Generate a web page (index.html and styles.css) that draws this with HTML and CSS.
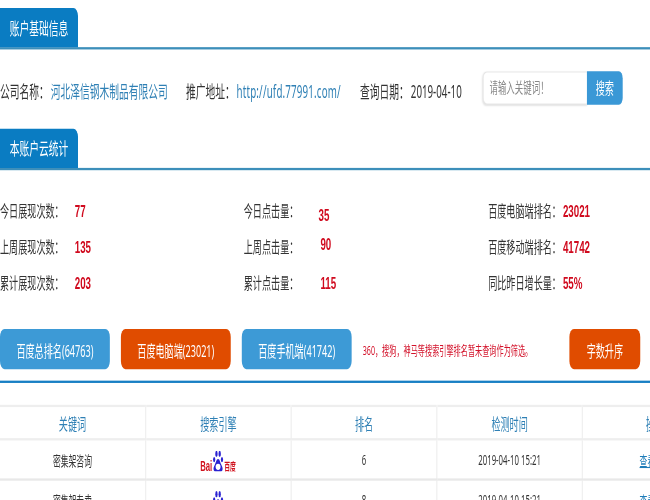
FILE: index.html
```html
<!DOCTYPE html>
<html lang="zh-CN">
<head>
<meta charset="utf-8">
<title>账户基础信息</title>
<link rel="stylesheet" href="styles.css">
</head>
<body>
<div class="page">
  <div class="head"><h2 class="tab">账户基础信息</h2></div>
  <div class="info">
    <span class="info-company">公司名称：<a class="link">河北泽信钢木制品有限公司</a></span>
    <span class="info-url">推广地址：<a class="link url">http://ufd.77991.com/</a></span>
    <span class="info-date">查询日期：<span class="date">2019-04-10</span></span>
    <form class="search">
      <input class="search-input" placeholder="请输入关键词！">
      <button class="search-btn" type="button">搜索</button>
    </form>
  </div>
  <div class="head"><h2 class="tab">本账户云统计</h2></div>
  <div class="stats">
    <div class="stat"><span class="label">今日展现次数：</span><b class="val">77</b></div>
    <div class="stat"><span class="label">今日点击量：</span><b class="val low">35</b></div>
    <div class="stat"><span class="label">百度电脑端排名：</span><b class="val">23021</b></div>
    <div class="stat"><span class="label">上周展现次数：</span><b class="val">135</b></div>
    <div class="stat"><span class="label">上周点击量：</span><b class="val high shift">90</b></div>
    <div class="stat"><span class="label">百度移动端排名：</span><b class="val">41742</b></div>
    <div class="stat"><span class="label">累计展现次数：</span><b class="val">203</b></div>
    <div class="stat"><span class="label">累计点击量：</span><b class="val shift">115</b></div>
    <div class="stat"><span class="label">同比昨日增长量：</span><b class="val">55%</b></div>
  </div>
  <div class="actions">
    <button class="btn blue" type="button">百度总排名(64763)</button>
    <button class="btn orange" type="button">百度电脑端(23021)</button>
    <button class="btn blue" type="button">百度手机端(41742)</button>
    <p class="note">360，搜狗，神马等搜索引擎排名暂未查询作为筛选。</p>
    <button class="btn orange small" type="button">字数升序</button>
  </div>
  <div class="rule"></div>
  <table class="table">
    <thead>
      <tr><th>关键词</th><th>搜索引擎</th><th>排名</th><th>检测时间</th><th>操作</th></tr>
    </thead>
    <tbody>
      <tr>
        <td>密集架咨询</td>
        <td><svg class="baidu" viewBox="0 0 56 20" width="56" height="18" preserveAspectRatio="none"><use href="#baidu-logo"/></svg></td>
        <td>6</td><td>2019-04-10 15:21</td><td><a class="view">查看详情</a></td>
      </tr>
      <tr>
        <td>密集架专卖</td>
        <td><svg class="baidu" viewBox="0 0 56 20" width="56" height="18" preserveAspectRatio="none"><use href="#baidu-logo"/></svg></td>
        <td>8</td><td>2019-04-10 15:21</td><td><a class="view">查看详情</a></td>
      </tr>
    </tbody>
  </table>
</div>
<svg class="defs" width="0" height="0">
  <defs>
    <g id="baidu-logo">
      <text x="0" y="19.500" class="logo-en" textLength="18.500" lengthAdjust="spacingAndGlyphs">Bai</text>
      <ellipse cx="21.500" cy="8.500" rx="1.700" ry="2.500" fill="#2a22d2"/>
      <ellipse cx="25" cy="3" rx="1.800" ry="3" fill="#2a22d2"/>
      <ellipse cx="30" cy="3" rx="1.800" ry="3" fill="#2a22d2"/>
      <ellipse cx="33.500" cy="8.500" rx="1.700" ry="2.500" fill="#2a22d2"/>
      <path d="M27.500 8c-2.500 0-3 3-5 5.500-2 2.500-2.500 4-1.500 5.500 1.500 1.500 3.500 1 6.500 1s5 .5 6.500-1c1-1.500.5-3-1.500-5.500-2-2.500-2.500-5.500-5-5.500z" fill="#2a22d2"/>
      <ellipse cx="27.500" cy="15.500" rx="3.800" ry="3" fill="#fff"/>
      <text x="37" y="19.500" class="logo-cn" textLength="18" lengthAdjust="spacingAndGlyphs">百度</text>
    </g>
  </defs>
</svg>
</body>
</html>
```
FILE: styles.css
```css
html, body {
  margin: 0;
  padding: 0;
  height: 500px;
  overflow: hidden;
  background: #fff;
}
.page {
  width: 1121px;
  padding-top: 7px;
  transform: scale(.65, 1.15);
  transform-origin: 0 0;
  font-family: "Noto Sans", "Noto Sans CJK SC", sans-serif;
  font-size: 15px;
  color: #333;
  filter: blur(.3px);
}
.defs { position: absolute; }
.head {
  border-bottom: 2px solid #3d8fba;
  width: 1000px;
}
.tab {
  width: 120px;
  height: 34px;
  margin: 0;
  background: #0a7cc2;
  border-radius: 0 7px 0 0;
  color: #fff;
  font-size: 15px;
  font-weight: 400;
  line-height: 34px;
  text-align: center;
}
.info {
  display: flex;
  align-items: center;
  height: 68.500px;
  line-height: 20px;
  white-space: nowrap;
}
.info-company { width: 286px; padding-top: 3px; }
.info-url { width: 268px; padding-top: 3px; }
.info-date { width: 189px; padding-top: 3px; }
.link, .date { margin-left: 3px; }
.link { color: #2f80b5; }
.url { letter-spacing: .25px; }
.search { display: flex; margin: -2px 0 0; }
.search-input {
  box-sizing: border-box;
  width: 160px;
  height: 29.500px;
  padding: 0 9px;
  border: 1px solid #e6e6e6;
  border-right: 0;
  border-radius: 6px 0 0 6px;
  box-shadow: 0 1px 2px #e4e4e4;
  font: 13px "Noto Sans", "Noto Sans CJK SC", sans-serif;
}
.search-input::placeholder { color: #888; opacity: 1; }
.search-btn {
  width: 55px;
  height: 29.500px;
  padding: 0;
  border: 0;
  border-radius: 0 6px 6px 0;
  background: #3a98d6;
  color: #fff;
  font: 14px "Noto Sans", "Noto Sans CJK SC", sans-serif;
}
.stats {
  display: grid;
  grid-template-columns: 375px 376px 300px;
  grid-auto-rows: 30.900px;
  width: 1000px;
  padding-top: 21.500px;
  font-size: 14px;
  line-height: 30.900px;
}
.stat { display: flex; white-space: nowrap; }
.label { width: 115px; flex: none; }
.val {
  color: #d00a1e;
  font: bold 15px/30.900px "Liberation Sans", sans-serif;
}
.low { margin-top: 2.500px; }
.high { margin-top: -2.500px; }
.shift { margin-left: 3px; }
.actions {
  display: flex;
  align-items: center;
  width: 985px;
  height: 34.800px;
  margin-top: 24.600px;
}
.btn {
  width: 169px;
  height: 34.800px;
  margin-right: 17px;
  padding: 0;
  border: 0;
  border-radius: 7px;
  color: #fff;
  font: 14px "Noto Sans", "Noto Sans CJK SC", sans-serif;
  flex: none;
}
.blue { background: #3d9ad6; }
.orange { background: #e04c00; }
.small { width: 109px; margin: 0; }
.note {
  flex: 1;
  margin: 0;
  color: #d3122a;
  font-size: 11px;
  white-space: nowrap;
}
.rule {
  width: 1000px;
  height: 2px;
  margin-top: 10.400px;
  background: #187fc4;
}
.table {
  width: 1121px;
  margin-top: 19px;
  border-collapse: collapse;
  table-layout: fixed;
  border-top: 2px solid #eee;
  font-size: 12px;
  text-align: center;
}
.table th {
  height: 27px;
  padding: 0;
  border-right: 2px solid #f0f0f0;
  border-bottom: 2px solid #eee;
  color: #2f80b5;
  font-size: 14px;
  font-weight: 400;
}
.table td {
  height: 33px;
  padding: 0;
  border-right: 2px solid #f0f0f0;
  border-bottom: 2px solid #e8e8e8;
}
.baidu { display: block; margin: 2px auto 0; }
.logo-en { fill: #d0121e; font: bold 14px "Liberation Sans", sans-serif; }
.logo-cn { fill: #d0121e; font: bold 11px "Noto Sans CJK SC", sans-serif; }
.view { color: #1f7cb8; text-decoration: underline; }
```
